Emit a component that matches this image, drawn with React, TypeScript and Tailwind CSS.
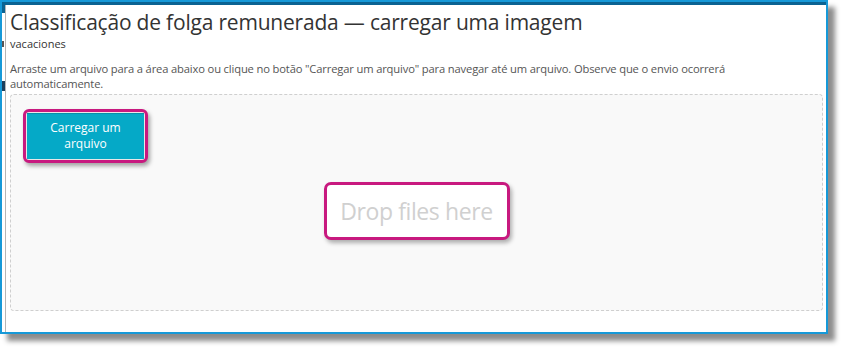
export default function App() {
  return (
    <div className="w-[841px] h-[347px] bg-white overflow-hidden" style={{ fontFamily: '"Open Sans", sans-serif' }}>
      {/* screenshot frame */}
      <div className="w-[828px] h-[334px] border-2 border-[#1699d8] shadow-[7px_7px_5px_rgba(0,0,0,0.45)] flex flex-col">
        <div className="h-[3px] bg-[#0b6392] shrink-0" />
        <div className="flex flex-1 min-h-0">
          {/* sliver of the page behind */}
          <div className="w-[3px] flex flex-col bg-white">
            <div className="h-[8px] bg-[#0b6392]" />
            <div className="h-[28px]" />
            <div className="h-[6px] w-[2px] bg-[#555]" />
            <div className="h-[34px]" />
            <div className="h-[10px] w-[3px] bg-[#1c3f5c]" />
          </div>
          {/* dialog */}
          <div className="flex-1 border-l border-[#b5b5b5] bg-white pl-[4px] pr-[2px] flex flex-col">
            <h1 className="text-[21px] leading-[28px] text-[#333] tracking-[-0.2px] mt-[3px] whitespace-nowrap">
              Classificação de folga remunerada — carregar uma imagem
            </h1>
            <div className="text-[11px] leading-[16px] text-[#333]">vacaciones</div>
            <p className="text-[11.2px] leading-[15px] text-[#555] mt-[9px] pr-[50px] tracking-[-0.15px]">
              Arraste um arquivo para a área abaixo ou clique no botão "Carregar um arquivo" para navegar até um arquivo. Observe que o envio ocorrerá automaticamente.
            </p>
            <div className="mt-[3px] h-[217px] mr-[1px] border border-dashed border-[#cfcfcf] rounded-[4px] bg-[#f9f9f9] grid">
              <div className="col-start-1 row-start-1 self-start justify-self-start ml-[12px] mt-[14px] p-[1px] rounded-[6px] border-[3px] border-[#c8197f] bg-[#e8e8e8] shadow-[2px_3px_4px_rgba(0,0,0,0.35)]">
                <button className="block w-[117px] h-[46px] bg-[#05a9c7] text-white text-[12px] leading-[16px] shadow-[inset_0_1px_0_rgba(0,0,0,0.15)]">
                  Carregar um
                  <br />
                  arquivo
                </button>
              </div>
              <div className="col-start-1 row-start-1 self-start justify-self-center mt-[87px] w-[186px] h-[58px] rounded-[7px] border-[3px] border-[#c8197f] bg-white shadow-[2px_3px_4px_rgba(0,0,0,0.3)] flex items-center justify-center">
                <span className="text-[23px] text-[#d0d0d0] tracking-[-0.4px]">Drop files here</span>
              </div>
            </div>
          </div>
        </div>
      </div>
    </div>
  );
}
